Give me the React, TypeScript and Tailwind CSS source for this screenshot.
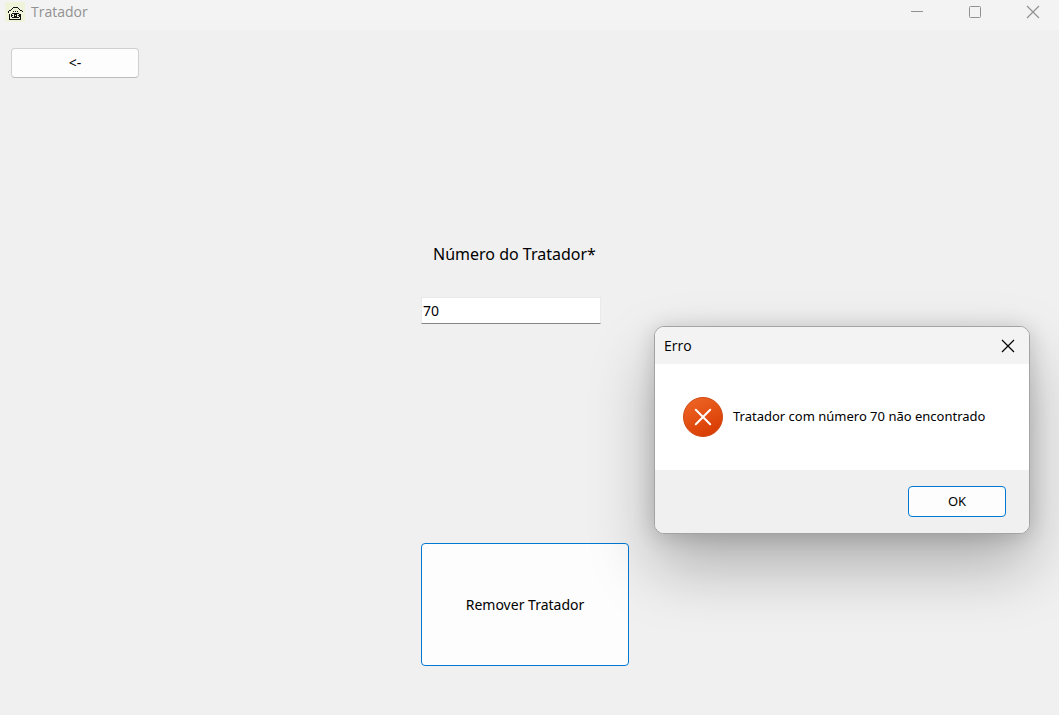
import { useState } from "react";

function HouseIcon() {
  return (
    <svg viewBox="0 0 20 20" className="size-5 bg-[#eef3d9]" shapeRendering="crispEdges" aria-hidden="true">
      <g fill="none" stroke="#111">
        <path d="M8 5.5h5M7 6.5h1M13 6.5h1M6 7.5h1M14 7.5h1M4 8.5h2M15 8.5h2M3 9.5h1M17 9.5h1M3 10.5h1" />
        <path d="M8 9.5h1M10 9.5h1M12 9.5h1" />
        <path d="M4.5 12v6M15.5 12v6M4 17.5h12" />
        <path d="M7 11.5h7M6 12.5h1M9 12.5h3M14 12.5h1M6 13.5h2M9 13.5h1M11 13.5h1M13 13.5h2M6 14.5h1M9 14.5h3M14 14.5h1M7 15.5h7" />
      </g>
    </svg>
  );
}

function CloseGlyph() {
  return (
    <svg viewBox="0 0 14 14" className="size-[14px]" fill="none" stroke="currentColor" strokeWidth="1.2" aria-hidden="true">
      <path d="M1 1l12 12M13 1L1 13" />
    </svg>
  );
}

function ErrorIcon() {
  return (
    <svg viewBox="0 0 40 40" className="size-10 shrink-0" aria-hidden="true">
      <defs>
        <linearGradient id="errorFill" x1="0.2" y1="0" x2="0.7" y2="1">
          <stop offset="0" stopColor="#ee6526" />
          <stop offset="1" stopColor="#d83b01" />
        </linearGradient>
      </defs>
      <circle cx="20" cy="20" r="19.5" fill="url(#errorFill)" stroke="#cf4a16" strokeWidth="1" />
      <path d="M12.8 12.8l14.4 14.4M27.2 12.8L12.8 27.2" stroke="#fff" strokeWidth="2" strokeLinecap="round" />
    </svg>
  );
}

function TitleBar() {
  return (
    <header className="flex h-[30px] items-start justify-between bg-[#f3f3f3] pl-[5px] text-[#919191]">
      <div className="flex items-center gap-[6px] pt-[2px]">
        <HouseIcon />
        <h1 className="font-['Open_Sans','Noto_Sans',sans-serif] text-sm leading-5">Tratador</h1>
      </div>
      <div className="flex h-6 items-center gap-11 pr-[19px]">
        <button type="button" aria-label="Minimizar">
          <svg viewBox="0 0 14 14" className="size-[14px]" stroke="currentColor" aria-hidden="true">
            <path d="M1 6.5h12" />
          </svg>
        </button>
        <button type="button" aria-label="Maximizar">
          <svg viewBox="0 0 14 14" className="size-[14px]" fill="none" stroke="currentColor" aria-hidden="true">
            <rect x="1.5" y="1.5" width="11" height="11" rx="1" />
          </svg>
        </button>
        <button type="button" aria-label="Fechar">
          <CloseGlyph />
        </button>
      </div>
    </header>
  );
}

function ErrorDialog({ message, onClose }: { message: string; onClose: () => void }) {
  return (
    <div
      role="alertdialog"
      aria-labelledby="dialog-title"
      aria-describedby="dialog-message"
      className="absolute top-[326px] right-[29px] w-[376px] overflow-hidden rounded-[10px] border border-[#a3a3a3] bg-white shadow-[0_32px_64px_rgba(0,0,0,0.28),0_2px_21px_rgba(0,0,0,0.16)]"
    >
      <div className="flex h-[37px] items-center justify-between bg-[#f3f3f3] pr-[14px] pl-[9px]">
        <h2 id="dialog-title" className="font-['Open_Sans','Noto_Sans',sans-serif] text-sm">Erro</h2>
        <button type="button" aria-label="Fechar aviso" onClick={onClose}>
          <CloseGlyph />
        </button>
      </div>
      <div className="flex h-[106px] items-center gap-[10px] pl-7">
        <ErrorIcon />
        <p id="dialog-message" className="text-[13px] whitespace-nowrap">{message}</p>
      </div>
      <div className="flex h-[63px] items-center justify-end bg-[#f0f0f0] pr-[23px]">
        <button
          type="button"
          onClick={onClose}
          className="h-[31px] w-[98px] rounded border border-[#0078d4] bg-[#fdfdfd] text-[13px]"
        >
          OK
        </button>
      </div>
    </div>
  );
}

export default function App() {
  const [numero, setNumero] = useState("70");
  const [aberto, setAberto] = useState(true);

  return (
    <div className="relative flex min-h-screen flex-col bg-[#f0f0f0] font-['Noto_Sans','Open_Sans',sans-serif] text-black">
      <TitleBar />
      <main className="flex flex-1 flex-col pt-[18px] pr-5 pb-12 pl-[11px]">
        <button
          type="button"
          className="h-[30px] w-32 rounded border border-[#d0d0d0] border-b-[#bcbcbc] bg-[#fdfdfd] text-sm"
        >
          &lt;-
        </button>
        <form className="mx-auto mt-[164px] flex w-52 flex-col items-start" onSubmit={(e) => e.preventDefault()}>
          <label htmlFor="numero" className="pl-3 text-base leading-6 whitespace-nowrap">
            Número do Tratador*
          </label>
          <input
            id="numero"
            value={numero}
            onChange={(e) => setNumero(e.target.value)}
            className="mt-[31px] h-[27px] w-[180px] border border-[#e9e9e9] border-b-[#868686] bg-white px-px text-sm outline-none"
          />
          <button
            type="submit"
            onClick={() => setAberto(true)}
            className="mt-[219px] h-[123px] w-full rounded border border-[#0078d4] bg-[#fdfdfd] text-sm"
          >
            Remover Tratador
          </button>
        </form>
      </main>
      {aberto && (
        <ErrorDialog message={`Tratador com número ${numero} não encontrado`} onClose={() => setAberto(false)} />
      )}
    </div>
  );
}
